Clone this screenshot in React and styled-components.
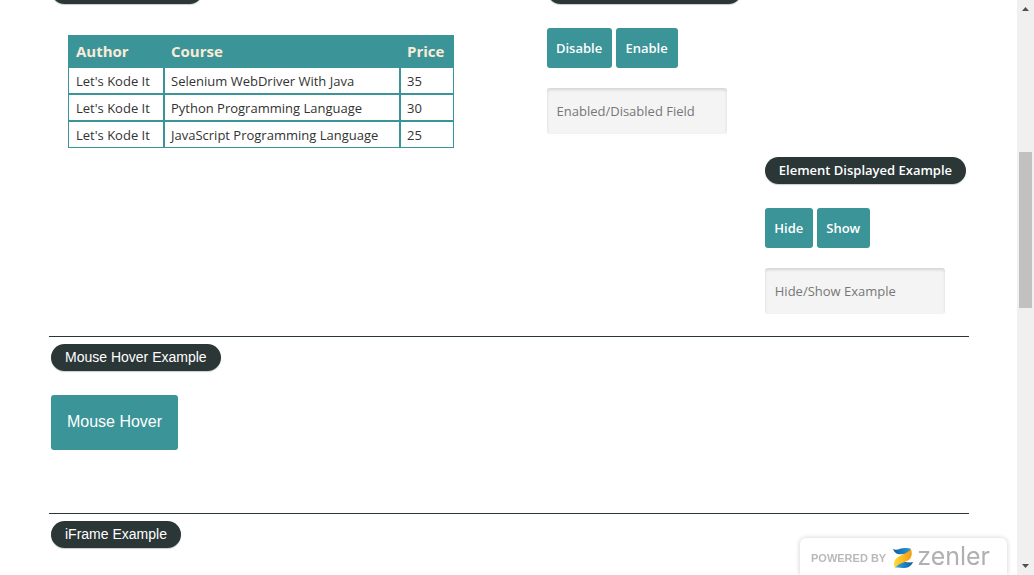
import React from "react";
import styled, { createGlobalStyle } from "styled-components";

const teal = "#3a9498";
const dark = "#2b3637";
const humanist = '"Trebuchet MS", "Open Sans", "Noto Sans", sans-serif';
const grotesque = 'Arial, "Liberation Sans", sans-serif';

const GlobalStyle = createGlobalStyle`
  *, *::before, *::after { box-sizing: border-box; }
  body { margin: 0; background: #fff; color: #333; font-family: ${humanist}; font-size: 14px; }
`;

const Shell = styled.div`
  display: flex;
  height: 100vh;
  overflow: hidden;
`;

const Page = styled.main`
  flex: 1;
  min-width: 0;
  padding: 0 48px;
`;

const Section = styled.section`
  border-top: 1px solid ${dark};
  padding: 7px 2px 0;
  margin: 0 0 0 1px;
`;

const HoverSection = styled(Section)`
  padding-bottom: 63px;
`;

const Examples = styled.div`
  display: grid;
  grid-template-columns: 498fr 218fr 204fr;
  padding-bottom: 22px;
`;

const TableColumn = styled.section`
  padding-left: 3px;
`;

const FieldColumn = styled.section`
  min-width: 0;
`;

const DisplayedColumn = styled(FieldColumn)`
  padding-top: 157px;
`;

const Legend = styled.h2`
  display: block;
  width: fit-content;
  height: 27px;
  margin: 0 0 24px;
  padding: 0 14px;
  border-radius: 14px;
  background: ${dark};
  box-shadow: 0 1px 1px #ccc;
  color: #fff;
  font-family: ${(p) => (p.$humanist ? humanist : grotesque)};
  font-size: ${(p) => (p.$humanist ? "13px" : "14px")};
  font-weight: ${(p) => (p.$humanist ? 600 : 400)};
  line-height: 27px;
  white-space: nowrap;
`;

/* Lower edge of a heading pill that is scrolled past the top. */
const ScrolledLegend = styled.div`
  height: 27px;
  width: ${(p) => p.$width}px;
  margin: -23px 0 24px;
  border-radius: 14px;
  background: ${dark};
  box-shadow: 0 1px 1px #ccc;
`;

const CourseTable = styled.table`
  width: 386px;
  margin: 31px 0 0 17px;
  table-layout: fixed;
  border-collapse: separate;
  border-spacing: 0;
  border: 1px solid ${teal};
  line-height: 20px;
  white-space: nowrap;

  th {
    height: 32px;
    padding: 0 7px 3px;
    background: ${teal};
    color: #faebd7;
    font-size: 15px;
    font-weight: 700;
    text-align: left;
  }
  th + th { padding-left: 8px; }
  td {
    height: 27px;
    padding: 0 7px;
    border-bottom: 2px solid ${teal};
    font-size: 13px;
  }
  td + td { border-left: 2px solid ${teal}; padding-left: 6px; }
  tr:last-child td { height: 25px; border-bottom: 0; }
`;

const Buttons = styled.div`
  display: flex;
  gap: 4px;
  margin-bottom: 20px;
`;

const Button = styled.button`
  width: ${(p) => p.$width}px;
  height: 40px;
  padding: 0;
  border: 0;
  border-radius: 3px;
  background: ${teal};
  color: #fff;
  font-family: ${humanist};
  font-size: 13px;
  font-weight: 600;
`;

const HoverButton = styled(Button)`
  height: 55px;
  font-family: ${grotesque};
  font-size: 16px;
  font-weight: 400;
  padding-bottom: 2px;
  display: block;
`;

const Field = styled.input`
  display: block;
  width: 180px;
  height: 46px;
  padding: 0 10px;
  border: 0;
  border-radius: 3px;
  background: #f4f4f4;
  box-shadow: inset 0 2px 3px rgba(0, 0, 0, 0.13);
  font-family: ${humanist};
  font-size: 13px;
  &::placeholder { color: #777; opacity: 1; }
`;

const Badge = styled.a`
  position: fixed;
  right: 27px;
  bottom: 0;
  display: flex;
  align-items: center;
  width: 207px;
  height: 37px;
  padding: 2px 0 0 11px;
  border-radius: 6px 6px 0 0;
  background: #fff;
  box-shadow: 0 0 5px rgba(0, 0, 0, 0.2);
  color: #b9b9b9;
  font: 700 11px ${grotesque};
  text-decoration: none;
  white-space: nowrap;
`;

const BadgeMark = styled.svg`
  flex: none;
  width: 20px;
  height: 20px;
  margin: 0 4px 0 7px;
`;

const Wordmark = styled.span`
  font: 400 25px/30px Inter, sans-serif;
  color: #b0b0b0;
  padding-bottom: 3px;
`;

const Scrollbar = styled.div`
  display: flex;
  flex-direction: column;
  align-items: center;
  width: 17px;
  background: #f0f0f0;
`;

const Arrow = styled.svg`
  width: 17px;
  height: 17px;
  flex: none;
`;

const Gap = styled.div`
  flex: ${(p) => p.$share};
`;

const Thumb = styled.div`
  flex: 156;
  width: 13px;
  background: #c1c1c1;
`;

const rows = [
  ["Let's Kode It", "Selenium WebDriver With Java", "35"],
  ["Let's Kode It", "Python Programming Language", "30"],
  ["Let's Kode It", "JavaScript Programming Language", "25"],
];

export default function App() {
  return (
    <>
      <GlobalStyle />
      <Shell>
        <Page>
          <Examples>
            <TableColumn>
              <ScrolledLegend $width={152} />
              <CourseTable>
                <colgroup>
                  <col width="94" />
                  <col width="236" />
                  <col width="54" />
                </colgroup>
                <thead>
                  <tr><th>Author</th><th>Course</th><th>Price</th></tr>
                </thead>
                <tbody>
                  {rows.map((row) => (
                    <tr key={row[1]}>{row.map((cell) => <td key={cell}>{cell}</td>)}</tr>
                  ))}
                </tbody>
              </CourseTable>
            </TableColumn>
            <FieldColumn>
              <ScrolledLegend $width={195} />
              <Buttons>
                <Button $width={65}>Disable</Button>
                <Button $width={62}>Enable</Button>
              </Buttons>
              <Field aria-label="Enabled/Disabled Field" placeholder="Enabled/Disabled Field" />
            </FieldColumn>
            <DisplayedColumn>
              <Legend $humanist>Element Displayed Example</Legend>
              <Buttons>
                <Button $width={48}>Hide</Button>
                <Button $width={53}>Show</Button>
              </Buttons>
              <Field aria-label="Hide/Show Example" placeholder="Hide/Show Example" />
            </DisplayedColumn>
          </Examples>
          <HoverSection>
            <Legend>Mouse Hover Example</Legend>
            <HoverButton $width={127}>Mouse Hover</HoverButton>
          </HoverSection>
          <Section>
            <Legend>iFrame Example</Legend>
          </Section>
        </Page>
        <Scrollbar>
          <Arrow viewBox="0 0 17 17"><path d="M5 11h7L8.500 7z" fill="#505050" /></Arrow>
          <Gap $share={135} />
          <Thumb />
          <Gap $share={250} />
          <Arrow viewBox="0 0 17 17"><path d="M5 6h7L8.500 10z" fill="#505050" /></Arrow>
        </Scrollbar>
      </Shell>
      <Badge href="#">
        POWERED BY
        <BadgeMark viewBox="0 0 20 20" aria-hidden="true">
          <defs>
            <linearGradient id="blueTop" x1="0" x2="1"><stop stopColor="#0b5c96" /><stop offset="1" stopColor="#2f9be0" /></linearGradient>
            <linearGradient id="gold" x1="0" x2="1"><stop stopColor="#ffdc35" /><stop offset="1" stopColor="#f99a10" /></linearGradient>
            <linearGradient id="blueBase" x1="0" x2="1"><stop stopColor="#3aa5e8" /><stop offset="1" stopColor="#0b5c96" /></linearGradient>
          </defs>
          <path d="M0 1C4 3 7 0 12 0C15 0 17 0 18 1C17 4 14 6 11 6C7 6 3 8 0 1Z" fill="url(#blueTop)" />
          <path d="M2 20C4 17 7 14 11 14C15 14 17 15 20 14C18 19 14 20 10 20C7 20 5 19 2 20Z" fill="url(#blueBase)" />
          <path d="M18 1C20 7 18 11 14 13C10 15 6 15 2 20C0 15 1 12 5 9C10 6 15 5 18 1Z" fill="url(#gold)" />
        </BadgeMark>
        <Wordmark>zenler</Wordmark>
      </Badge>
    </>
  );
}
